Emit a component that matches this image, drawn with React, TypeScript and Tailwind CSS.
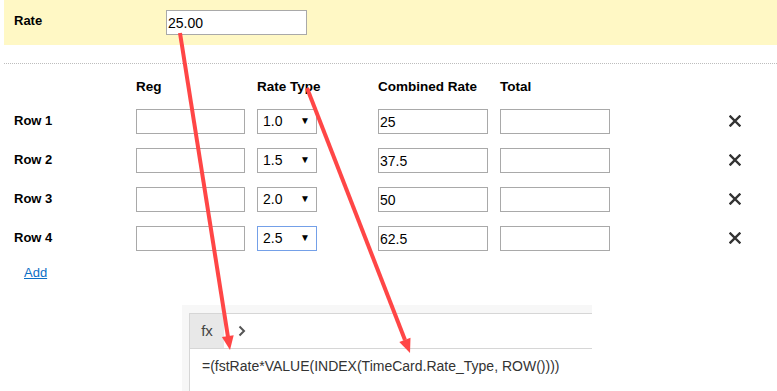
import { useState } from 'react';

interface RateRow {
    id: number;
    label: string;
    rateType: string;
    combined: string;
}

const RATE_TYPES = ['1.0', '1.5', '2.0', '2.5'];

const initialRows: RateRow[] = [
    { id: 1, label: 'Row 1', rateType: '1.0', combined: '25' },
    { id: 2, label: 'Row 2', rateType: '1.5', combined: '37.5' },
    { id: 3, label: 'Row 3', rateType: '2.0', combined: '50' },
    { id: 4, label: 'Row 4', rateType: '2.5', combined: '62.5' },
];

function CloseIcon() {
    return (
        <svg width="12" height="12" viewBox="0 0 12 12" className="block">
            <path d="M1.5 1.5 L10.5 10.5 M10.5 1.5 L1.5 10.5" stroke="#333" strokeWidth="2.4" strokeLinecap="square" />
        </svg>
    );
}

export default function App() {
    const [rate, setRate] = useState('25.00');
    const [rows, setRows] = useState(initialRows);

    const inputCls = 'h-[25px] border border-[#a9a9a9] bg-white px-[1px] text-[14px] outline-none';

    return (
        <div className="relative w-[777px] h-[391px] overflow-hidden bg-white text-[13px] text-black font-['Liberation_Sans',Arial,sans-serif]">
            <div className="ml-[4px] h-[45px] bg-[#fff8c5] flex items-start pt-[10px]">
                <div className="w-[162px] pl-[10px] mt-[3px] font-bold leading-[16px]">Rate</div>
                <input
                    value={rate}
                    onChange={e => setRate(e.target.value)}
                    className={`${inputCls} w-[141px]`}
                />
            </div>

            <div className="ml-[4px] mt-[18px] border-t border-dotted border-[#bdbdbd]" />

            <div className="flex pl-[136px] mt-[15px] font-bold leading-[16px] text-[13.5px]">
                <div className="w-[121px]">Reg</div>
                <div className="w-[121px]">Rate Type</div>
                <div className="w-[122px]">Combined Rate</div>
                <div>Total</div>
            </div>

            <div className="flex flex-col gap-[14px] mt-[14px]">
                {rows.map(row => (
                    <div key={row.id} className="flex items-center h-[25px]">
                        <div className="w-[136px] pl-[14px] font-bold leading-[16px] -mt-[2px]">{row.label}</div>
                        <input className={`${inputCls} w-[109px]`} />
                        <div className="relative ml-[12px] w-[60px] h-[25px]">
                            <select
                                value={row.rateType}
                                onChange={e => setRows(prev => prev.map(r => r.id === row.id ? { ...r, rateType: e.target.value } : r))}
                                className={`appearance-none w-full h-full border bg-white pl-[5px] text-[14px] outline-none ${row.id === 4 ? 'border-[#74a0e8]' : 'border-[#a9a9a9]'}`}
                            >
                                {RATE_TYPES.map(t => <option key={t} value={t}>{t}</option>)}
                            </select>
                            <span className="absolute right-[7px] top-[7px] text-[10px] leading-[10px] pointer-events-none">▼</span>
                        </div>
                        <input defaultValue={row.combined} className={`${inputCls} ml-[61px] w-[110px]`} />
                        <input className={`${inputCls} ml-[12px] w-[110px]`} />
                        <button
                            onClick={() => setRows(prev => prev.filter(r => r.id !== row.id))}
                            className="ml-[119px] -mt-[2px]"
                        >
                            <CloseIcon />
                        </button>
                    </div>
                ))}
            </div>

            <div className="pl-[24px] mt-[14px] leading-[16px]">
                <a href="#" className="text-[#0a6ec6] underline">Add</a>
            </div>

            <div className="ml-[182px] mt-[24px] w-[410px] h-[100px] bg-[#f7f7f7] pt-[8px] pl-[7px]">
                <div className="h-full bg-white border-l border-t border-[#d6d6d6]">
                    <div className="flex h-[35px] border-b border-[#d6d6d6]">
                        <div className="w-[34px] bg-[#e8e8e8] flex items-center justify-center text-[15px] text-[#444]">fx</div>
                        <svg width="8" height="12" viewBox="0 0 8 12" className="ml-[14px] self-center">
                            <path d="M1.5 1.5 L6 6 L1.5 10.5" fill="none" stroke="#555" strokeWidth="2" />
                        </svg>
                    </div>
                    <div className="pl-[12px] pt-[9px] text-[14px] text-[#333] leading-[16px]">
                        =(fstRate*VALUE(INDEX(TimeCard.Rate_Type, ROW())))
                    </div>
                </div>
            </div>

            <svg className="absolute inset-0 pointer-events-none" width="777" height="391">
                <line x1="180" y1="33" x2="228" y2="337" stroke="#ff4646" strokeWidth="4" />
                <polygon points="230,350 233.7,335.2 221.9,337.1" fill="#ff4646" />
                <line x1="307" y1="88" x2="405" y2="340" stroke="#ff4646" strokeWidth="4" />
                <polygon points="410,353 410.5,337.8 399.3,342.1" fill="#ff4646" />
            </svg>
        </div>
    );
}
